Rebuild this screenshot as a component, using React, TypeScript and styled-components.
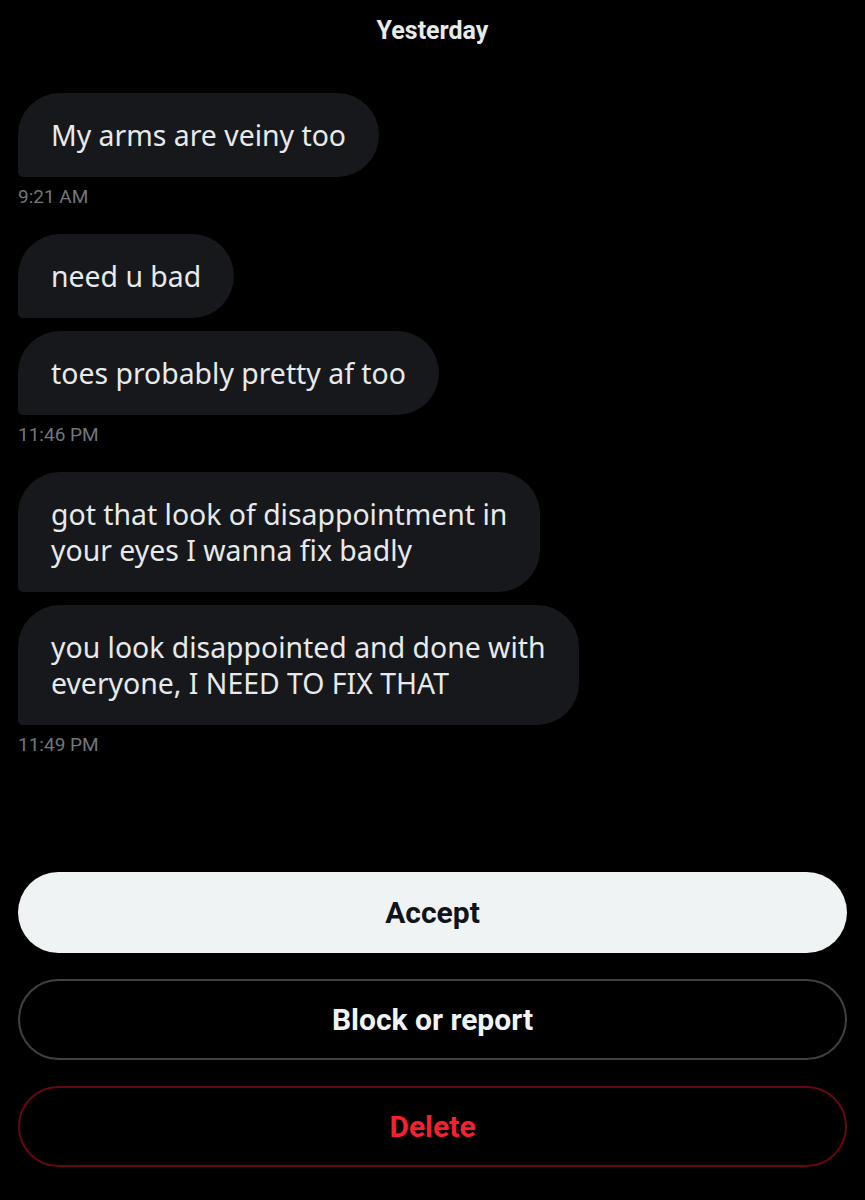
import styled, { createGlobalStyle } from 'styled-components'

const GlobalStyle = createGlobalStyle`
  html, body {
    margin: 0;
    padding: 0;
    background: #000000;
  }
`

const Page = styled.div`
  width: 865px;
  height: 1200px;
  background: #000000;
  display: flex;
  flex-direction: column;
  padding: 0 18px;
  box-sizing: border-box;
  font-family: 'Noto Sans', 'Open Sans', sans-serif;
  color: #e7e9ea;
`

const DayLabel = styled.div`
  height: 60px;
  display: flex;
  align-items: center;
  justify-content: center;
  font-family: 'Roboto', sans-serif;
  font-weight: 700;
  font-size: 25px;
  color: #e7e9ea;
  margin-bottom: 33px;
`

const Group = styled.div`
  display: flex;
  flex-direction: column;
  align-items: flex-start;
  gap: 13px;
  margin-bottom: 26px;
`

const Bubble = styled.div`
  background: #16181c;
  border-radius: 42px 42px 42px 5px;
  padding: 24px 33px;
  font-size: 28.4px;
  line-height: 36px;
  color: #e7e9ea;
  white-space: nowrap;
`

const Time = styled.div`
  font-family: 'Roboto', sans-serif;
  font-size: 19px;
  line-height: 22px;
  color: #71767b;
  margin-top: -4px;
`

const Actions = styled.div`
  margin-top: auto;
  margin-bottom: 33px;
  display: flex;
  flex-direction: column;
  gap: 26px;
`

const ActionButton = styled.button<{ $variant: 'primary' | 'outline' | 'danger' }>`
  height: 81px;
  border-radius: 41px;
  font-family: 'Roboto', sans-serif;
  font-weight: 700;
  font-size: 30px;
  cursor: pointer;
  background: ${({ $variant }) => ($variant === 'primary' ? '#eff3f4' : '#000000')};
  color: ${({ $variant }) =>
    $variant === 'primary' ? '#0f1419' : $variant === 'danger' ? '#f4212e' : '#eff3f4'};
  border: ${({ $variant }) =>
    $variant === 'primary' ? 'none' : $variant === 'danger' ? '2px solid #67070f' : '2px solid #3e4144'};
`

const groups: { lines: string[][]; time: string }[] = [
  { lines: [['My arms are veiny too']], time: '9:21 AM' },
  { lines: [['need u bad'], ['toes probably pretty af too']], time: '11:46 PM' },
  {
    lines: [
      ['got that look of disappointment in', 'your eyes I wanna fix badly'],
      ['you look disappointed and done with', 'everyone, I NEED TO FIX THAT'],
    ],
    time: '11:49 PM',
  },
]

export default function App() {
  return (
    <Page>
      <GlobalStyle />
      <DayLabel>Yesterday</DayLabel>
      {groups.map((g) => (
        <Group key={g.time}>
          {g.lines.map((msg, i) => (
            <Bubble key={i}>
              {msg.map((line, j) => (
                <div key={j}>{line}</div>
              ))}
            </Bubble>
          ))}
          <Time>{g.time}</Time>
        </Group>
      ))}
      <Actions>
        <ActionButton $variant="primary">Accept</ActionButton>
        <ActionButton $variant="outline">Block or report</ActionButton>
        <ActionButton $variant="danger">Delete</ActionButton>
      </Actions>
    </Page>
  )
}
